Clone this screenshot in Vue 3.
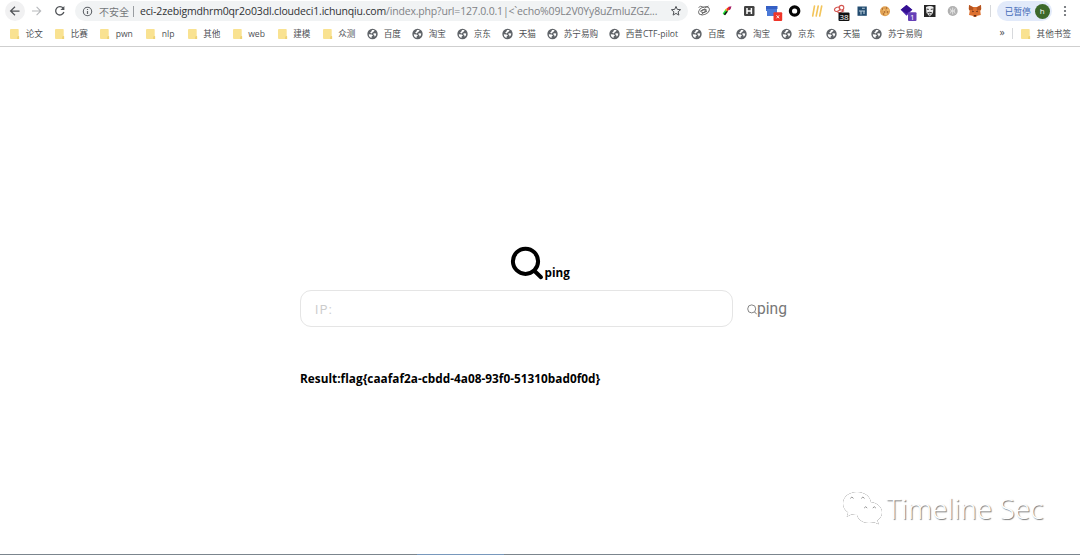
<script setup>
const bookmarks = [
  { t: '论文', w: 45, f: 1 }, { t: '比赛', w: 45, f: 1 }, { t: 'pwn', w: 46, f: 1 },
  { t: 'nlp', w: 41.5, f: 1 }, { t: '其他', w: 45, f: 1 }, { t: 'web', w: 45, f: 1 },
  { t: '建模', w: 45, f: 1 }, { t: '众测', w: 44.5, f: 1 }, { t: '百度', w: 45 },
  { t: '淘宝', w: 45 }, { t: '京东', w: 45 }, { t: '天猫', w: 45 }, { t: '苏宁易购', w: 62 },
  { t: '西普CTF-pilot', w: 82.3 }, { t: '百度', w: 45 }, { t: '淘宝', w: 45 },
  { t: '京东', w: 45 }, { t: '天猫', w: 45 }, { t: '苏宁易购', w: 60 },
]
</script>

<template>
  <div class="window">
    <header>
      <div class="toolbar">
        <span class="back">
          <svg width="20" height="20" viewBox="0 0 20 20"><path d="M14.5 10H6M10 5.7L5.6 10l4.4 4.3" fill="none" stroke="#505357" stroke-width="1.25" /></svg>
        </span>
        <svg class="forward" width="20" height="20" viewBox="0 0 20 20"><path d="M5 10h8.5M9.6 5.9l4.1 4.1-4.1 4.1" fill="none" stroke="#b7b9bc" stroke-width="1.1" /></svg>
        <svg class="reload" width="20" height="20" viewBox="0 0 20 20"><path d="M13.2 7.2A4.2 4.2 0 1 0 13.9 11" fill="none" stroke="#505357" stroke-width="1.3" /><path d="M14.4 5v4h-4z" fill="#505357" /></svg>
        <div class="address">
          <svg class="info" width="11" height="11" viewBox="0 0 11 11"><circle cx="5.5" cy="5.5" r="4.2" fill="none" stroke="#5f6368" stroke-width="1.1" /><path d="M5.5 5v3M5.5 3v1.1" stroke="#5f6368" stroke-width="1.2" /></svg>
          <span class="insecure">不安全</span><i class="bar"></i>
          <span class="host">eci-2zebigmdhrm0qr2o03dl.cloudeci1.ichunqiu.com</span><span class="path">/index.php?url=127.0.0.1|&lt;`echo%09L2V0Yy8uZmluZGZ...</span>
          <svg class="star" width="12" height="12" viewBox="0 0 12 12"><path d="M6 1.4l1.3 3 3.3.3-2.5 2.1.8 3.3L6 8.4l-2.9 1.7.8-3.3-2.5-2.1 3.3-.3z" fill="none" stroke="#505357" stroke-width="1" /></svg>
        </div>
        <div class="extensions">
          <svg viewBox="0 0 22 22"><g fill="none" stroke="#666" stroke-width=".9"><ellipse cx="11" cy="10.8" rx="5.7" ry="3.7" transform="rotate(-25 11 10.8)" /><path d="M5.5 7.5q2-2 4-.7l2 1.2 4-2M7 11.5l3-2 3 1M8 15l3-3 3-.5" /><ellipse cx="11" cy="11" rx="2.5" ry="1.4" transform="rotate(-25 11 11)" /></g></svg>
          <svg viewBox="0 0 22 22"><path d="M6.7 13.5l3-4.5 2.7 1.7-4 4.5z" fill="#23df36" /><path d="M7.8 14.3l2.5-3 1.6.3-2.7 3.6z" fill="#111" /><path d="M9.5 9.5l3.5-3 1.5 2-3.5 3z" fill="#f12f24" /><path d="M9 9.5l1.2-1 .8 1.5-1 1z" fill="#e7d938" /><path d="M13 6.7l2.5-.5-1 3-1.5 1z" fill="#a51c65" /></svg>
          <svg viewBox="0 0 22 22"><rect x="6" y="6" width="10.5" height="10" rx="1.3" fill="#414141" /><path d="M9 8v6M13.4 8v6M9 11h4.4" stroke="#fff" stroke-width="1.5" /></svg>
          <svg viewBox="0 0 22 22"><path d="M5 6h11v10H6V11H5z" fill="#4b79d7" /><path d="M5 6h11.5v3H5z" fill="#345fc4" /><rect x="12.5" y="12.3" width="8.7" height="8.7" rx="1" fill="#ef3529" /><path d="M15.5 15.3l2.7 3m0-3l-2.7 3" stroke="#fff" stroke-width=".9" /></svg>
          <svg viewBox="0 0 22 22"><circle cx="11.6" cy="11" r="4.2" fill="#fff" stroke="#060606" stroke-width="3.2" /></svg>
          <svg viewBox="0 0 22 22"><path d="M8.5 6L6.7 16M12.2 6l-2 10M15.7 6l-2 10" stroke="#f3c55b" stroke-width="1.6" stroke-linecap="round" /></svg>
          <svg viewBox="0 0 22 22"><g fill="none" stroke="#d45550" stroke-width="1.1"><ellipse cx="8.2" cy="9.3" rx="2.8" ry="2" transform="rotate(-25 8.2 9.3)" /><circle cx="12.5" cy="7.7" r="2.3" /><path d="M8 11.5l2.5 1.5 4-2-1.5-1" /></g><rect x="9.5" y="12.5" width="11" height="8.5" rx="1" fill="#111" /><text x="15" y="19.7" text-anchor="middle" font-size="8" fill="#fff">38</text></svg>
          <svg viewBox="0 0 22 22"><rect x="6.5" y="6.5" width="9.3" height="9.3" fill="#234c70" /><path d="M11 8.2h2.8M8 11h6M13 11v3M10 11.5v3" stroke="#b9ccda" stroke-width="1.1" /></svg>
          <svg viewBox="0 0 22 22"><circle cx="11" cy="11.3" r="5" fill="#dfa052" /><path d="M8 9h1M12 8h1M10 12h1M13 12h1M9 14h1" stroke="#8b4b20" stroke-width="1.2" /><path d="M9 10h2M11 14h2M13 10h2" stroke="#ffcf7e" /></svg>
          <svg viewBox="0 0 22 22"><path d="M4.7 9.8L10.5 5l5.8 4.8-5.8 6z" fill="#4a25ad" /><path d="M4.7 9.8L10.5 5l5.8 4.8-5.8 3.5z" fill="#351092" /><rect x="12" y="12.3" width="8.5" height="8.7" rx="1" fill="#6540b7" /><text x="16.2" y="19.6" text-anchor="middle" font-size="8" fill="#fff">1</text></svg>
          <svg viewBox="0 0 22 22"><rect x="5" y="5" width="11.5" height="12" fill="#252525" /><path d="M7 7q4-2 7.5 0l-.5 6-3.3 3.4L7.5 13z" fill="#eee" /><path d="M7.8 9.1l2 .3M11.8 9.4l2-.3M8.3 13q2.5-1.5 5 0M10.8 13.5v2" stroke="#222" stroke-width=".9" fill="none" /></svg>
          <svg viewBox="0 0 22 22"><circle cx="10.7" cy="11" r="5" fill="#b0b0b0" /><path d="M8.2 8.5q2.5 2.5 0 5m5-5q-2.5 2.5 0 5M10.7 7.5v7M8.7 11h4" fill="none" stroke="#eee" stroke-width=".8" /></svg>
          <svg viewBox="0 0 22 22"><path d="M5 5l4 2h4l4-2 .3 4-1 2 .5 4-3.5.8L12 17h-2l-1.5-1.2L5 15l.7-4-1-2z" fill="#dd7130" /><path d="M5 5l4.5 2.5L9 10H5zM17 5l-4.5 2.5.5 2.5h4z" fill="#b45420" /><path d="M8 10.5l2.2 1-1.6.8zM14 10.5l-2.2 1 1.6.8zM9.7 15h2.6l-.4 1.5h-1.8z" fill="#5b2c1b" /></svg>
        </div>
        <i class="divider"></i>
        <div class="profile"><span>已暂停</span><b>h</b></div>
        <svg class="menu" width="4" height="12" viewBox="0 0 4 12"><g fill="#5f6368"><circle cx="2" cy="2" r="1.1" /><circle cx="2" cy="6" r="1.1" /><circle cx="2" cy="10" r="1.1" /></g></svg>
      </div>

      <nav>
        <div v-for="(b, i) in bookmarks" :key="i" class="bookmark" :style="{ width: b.w + 'px' }">
          <svg v-if="b.f" width="10" height="12" viewBox="0 0 10 12"><path d="M1 1h7q.7 0 .7.8V8l.5.3V11H1q-1 0-1-1V2q0-1 1-1z" fill="#f9e291" /><path d="M7.3 11V9q0-1 1.5-1v3z" fill="#edcf6d" /></svg>
          <svg v-else width="11" height="12" viewBox="0 0 11 12"><circle cx="5.5" cy="6" r="5.2" fill="#5f6368" /><path d="M1.8 6.2l3 .3 1.2 1.3-1.3.5v1.5Q1.8 9.3 1.8 6.2zM5 2.1h2.3v1L5.5 4.5 4.6 5.6 3.1 4.8 4.4 3.5zM7.3 5.2l1.9.2q.2 1.8-1.4 3.3L7 6.8 5.8 6z" fill="#fff" /></svg>
          <span>{{ b.t }}</span>
        </div>
        <div class="other">
          <span class="more">»</span><i></i>
          <svg width="10" height="12" viewBox="0 0 10 12"><path d="M1 1h7q.7 0 .7.8V8l.5.3V11H1q-1 0-1-1V2q0-1 1-1z" fill="#f9e291" /><path d="M7.3 11V9q0-1 1.5-1v3z" fill="#edcf6d" /></svg>
          <span>其他书签</span>
        </div>
      </nav>
    </header>

    <main>
      <h1><svg width="34" height="35" viewBox="0 0 34 35"><circle cx="15.5" cy="15.3" r="12.6" fill="none" stroke="#000" stroke-width="4" /><path d="M24.8 25.2l6.2 6" stroke="#000" stroke-width="4" stroke-linecap="round" /></svg><span>ping</span></h1>
      <form @submit.prevent>
        <input placeholder="IP:" aria-label="IP">
        <button type="button"><svg width="10" height="12" viewBox="0 0 10 12"><circle cx="4.7" cy="5.9" r="4" fill="none" stroke="#777" stroke-width=".9" /><path d="M7.5 8.9l2.3 2.4" stroke="#777" /></svg><span>ping</span></button>
      </form>
      <p>Result:flag{caafaf2a-cbdd-4a08-93f0-51310bad0f0d}</p>
    </main>

    <div class="watermark">
      <svg width="44" height="38" viewBox="0 0 44 38"><g class="bubbles" fill="#fff"><path d="M15 2C7 2 1 7 1 13.5c0 4 2 7 5.2 9L4.8 26.8l5-2.5q3 .8 6 .5C24 24 29 19.8 29 13.5 29 7 23 2 15 2z" /><path d="M27 12c-7.2 0-12.3 4.5-12.3 10.5S19.8 33 27 33q2.5 0 5-.8l4.8 2-1.5-3.8c3-2 4.7-4.7 4.7-8C40 16.5 34 12 27 12z" /></g><g fill="none" stroke="#888" stroke-width=".9"><path d="M8.3 8.4q1.6-2.7 3.2 0M19.3 8.4q1.6-2.7 3.2 0M22.2 18q1.5-2.5 3 0M30.8 18q1.5-2.5 3 0" /></g></svg>
      <span>Timeline Sec</span>
    </div>
    <footer><i></i></footer>
  </div>
</template>

<style>
body { margin: 0; background: #fff; }
</style>

<style scoped>
* { box-sizing: border-box; }
svg { display: block; flex: none; }
.window { position: relative; width: 1080px; height: 555px; display: flex; flex-direction: column; overflow: hidden; background: #fff; font-family: "Open Sans", "Noto Sans CJK SC", sans-serif; }
header { height: 47px; border-bottom: 1px solid #cfcfcf; flex: none; }
.toolbar { height: 22px; display: flex; align-items: center; padding-left: 5px; white-space: nowrap; }
.back { width: 20px; height: 20px; border-radius: 50%; background: #f1f1f2; }
.forward { margin-left: 2px; }
.reload { margin-left: 3px; }
.address { display: flex; align-items: center; width: 613px; height: 20px; margin-left: 5px; border-radius: 10px; background: #f1f3f4; padding-left: 7px; font-size: 10.5px; }
.insecure { margin-left: 6px; width: 31px; font-size: 10px; color: #74777b; }
.bar { width: 1px; height: 11px; margin: 0 6px 0 3px; background: #999da1; }
.host { width: 246px; color: #303235; letter-spacing: -.16px; }
.path { width: 273px; color: #7f8286; letter-spacing: -.17px; }
.star { margin-left: 11px; }
.extensions { display: grid; grid-template-columns: repeat(13, 22.6px); margin-left: 5px; }
.extensions svg { width: 22px; height: 22px; font-family: "Open Sans", sans-serif; }
.divider { width: 1px; height: 12px; background: #d7d9dc; margin-left: 3px; }
.profile { display: flex; align-items: center; width: 55px; height: 20px; margin-left: 6px; padding-left: 8px; border-radius: 10px; background: #e2eafa; color: #4169b7; font-size: 8.7px; }
.profile b { width: 15px; height: 15px; margin-left: 4px; border-radius: 50%; background: #3d692b; color: #fff; font-size: 8px; font-weight: 400; line-height: 14px; text-align: center; }
.menu { margin-left: 11px; }
nav { height: 23px; padding-left: 10px; display: flex; align-items: center; font-size: 8.6px; color: #4d5054; white-space: nowrap; }
.bookmark { display: flex; align-items: center; flex: none; }
.bookmark span { margin-left: 5.7px; }
.other { display: flex; align-items: center; margin-left: auto; padding-right: 9px; }
.other > i { width: 1px; height: 11px; background: #d7d9dc; margin: 0 8px 0 7px; }
.other > svg + span { margin-left: 6px; }
.more { font-size: 10.5px; line-height: 14px; margin-top: -3px; }
main { flex: 1; width: 492px; margin-left: 300px; padding-top: 199px; }
h1 { display: flex; align-items: flex-end; height: 35px; margin: 0 0 9px 210px; font-size: 11.7px; line-height: 16px; color: #000; }
h1 span { margin: 0 0 1px .5px; }
form { display: flex; align-items: center; height: 37px; }
input { width: 433px; height: 37px; border: 1px solid #e5e5e5; border-radius: 11px; padding: 2px 14px 0; outline: 0; font: 12px Roboto, sans-serif; letter-spacing: 1.4px; }
input::placeholder { color: #ccc; opacity: 1; }
button { display: flex; align-items: center; margin-left: 14px; padding: 0; border: 0; background: none; color: #777; font: 15.6px Roboto, sans-serif; }
p { margin: 43px 0 0; font-size: 11.8px; letter-spacing: .02px; line-height: 16px; font-weight: 700; color: #000; white-space: nowrap; }
.watermark { position: absolute; left: 842px; top: 490px; display: flex; align-items: center; }
.bubbles { filter: drop-shadow(.8px .8px .6px #777) drop-shadow(0 0 .3px #aaa); }
.watermark span { margin-left: .5px; font: 300 27.5px/38px "Open Sans", sans-serif; letter-spacing: .25px; color: #fff; text-shadow: 1px 1px 1px #777; white-space: nowrap; }
footer { height: 1px; background: #7b858d; flex: none; }
footer i { display: block; width: 87px; height: 1px; margin-left: 417px; background: #7898bc; }
</style>
